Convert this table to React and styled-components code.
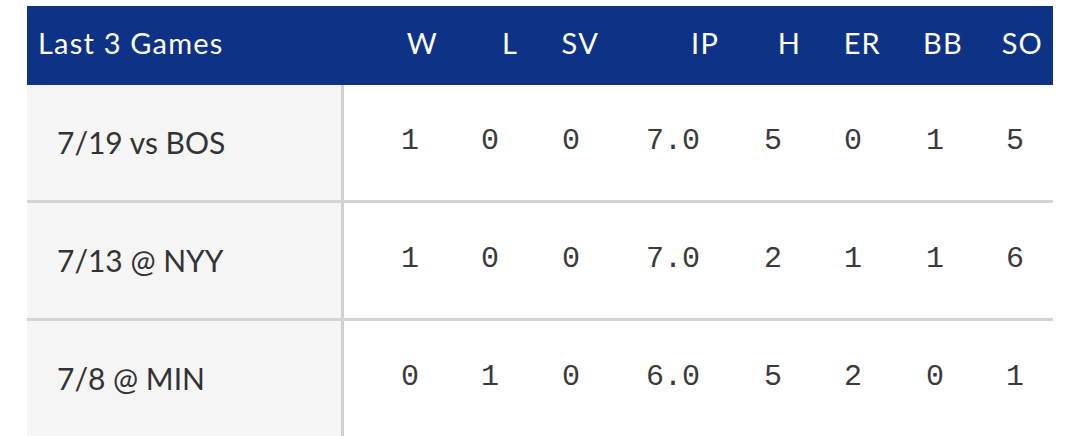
import React from "react";
import styled, { createGlobalStyle } from "styled-components";

const GlobalStyle = createGlobalStyle`
  html, body {
    margin: 0;
    padding: 0;
    background: #ffffff;
  }
`;

// first column holds the game label, the rest are the stat columns
const columns = "317px 104px 80px 81px 120px 82px 80px 82px 80px";

const Page = styled.div`
  padding: 6px 27px 0;
  width: 1026px;
`;

const HeaderRow = styled.div`
  display: grid;
  grid-template-columns: ${columns};
  height: 79px;
  background-color: #0e3386;
  color: #ffffff;
  font-family: Lato, "Open Sans", sans-serif;
  font-size: 29px;
  letter-spacing: 1.2px;
`;

const HeaderCell = styled.div`
  display: flex;
  align-items: center;
  justify-content: ${(props) => (props.$left ? "flex-start" : "flex-end")};
  padding: 0 ${(props) => (props.$left ? "0" : "10px")} 6px ${(props) => (props.$left ? "11px" : "0")};
`;

const Row = styled.div`
  display: grid;
  grid-template-columns: ${columns};
  height: 115px;
  border-bottom: 3px solid #d4d4d4;
`;

const GameCell = styled.div`
  display: flex;
  align-items: center;
  padding: 0 0 2px 30px;
  background-color: #f5f5f5;
  border-right: 3px solid #d0d0d0;
  color: #333333;
  font-family: Lato, "Open Sans", sans-serif;
  font-size: 30px;
`;

const StatCell = styled.div`
  display: flex;
  align-items: center;
  justify-content: flex-end;
  padding: 0 29px 3px 0;
  color: #3a3a3a;
  font-family: "Liberation Mono", monospace;
  font-size: 30px;
`;

const headers = ["W", "L", "SV", "IP", "H", "ER", "BB", "SO"];

const games = [
  { label: "7/19 vs BOS", stats: ["1", "0", "0", "7.0", "5", "0", "1", "5"] },
  { label: "7/13 @ NYY", stats: ["1", "0", "0", "7.0", "2", "1", "1", "6"] },
  { label: "7/8 @ MIN", stats: ["0", "1", "0", "6.0", "5", "2", "0", "1"] },
];

function App() {
  return (
    <Page>
      <GlobalStyle />
      <HeaderRow>
        <HeaderCell $left>Last 3 Games</HeaderCell>
        {headers.map((h) => (
          <HeaderCell key={h}>{h}</HeaderCell>
        ))}
      </HeaderRow>
      {games.map((game) => (
        <Row key={game.label}>
          <GameCell>{game.label}</GameCell>
          {game.stats.map((s, i) => (
            <StatCell key={i}>{s}</StatCell>
          ))}
        </Row>
      ))}
    </Page>
  );
}

export default App;
